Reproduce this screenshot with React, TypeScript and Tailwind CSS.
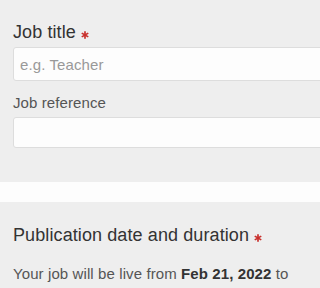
import React from "react";

function Required() {
  return (
    <svg
      viewBox="0 0 16 16"
      className="ml-[5px] inline-block h-[8px] w-[8px] align-[-1px]"
      aria-hidden="true"
    >
      <g stroke="#c9302c" strokeWidth="3.4" strokeLinecap="butt">
        <line x1="8" y1="0.5" x2="8" y2="15.5" />
        <line x1="1.5" y1="4.25" x2="14.5" y2="11.75" />
        <line x1="1.5" y1="11.75" x2="14.5" y2="4.25" />
      </g>
    </svg>
  );
}

export default function App() {
  return (
    <div className="h-[288px] w-full overflow-hidden bg-[#fdfdfd] font-['Liberation_Sans',Arial,sans-serif] tracking-[0.1px]">
      {/* Job details */}
      <section className="overflow-hidden bg-[#eeeeee] pb-[34px] pl-[13px] pt-[22px]">
        <label className="block text-[18px] leading-[20px] text-[#333333]">
          Job title
          <Required />
        </label>
        <input
          placeholder="e.g. Teacher"
          className="mt-[5px] block h-[34px] w-[calc(100%+8px)] rounded-[3px] border border-[#dddddd] bg-[#fdfdfd] px-[6px] text-[15px] text-[#333] placeholder:text-[#999999] outline-none"
        />

        <label className="mt-[12px] block text-[15px] leading-[20px] text-[#555555]">
          Job reference
        </label>
        <input className="mt-[4px] block h-[31px] w-[calc(100%+8px)] rounded-[3px] border border-[#dddddd] bg-[#fdfdfd] px-[6px] text-[15px] outline-none" />
      </section>

      <div className="h-[20px]" />

      {/* Publication */}
      <section className="bg-[#eeeeee] pb-[4px] pl-[13px] pt-[23px]">
        <h2 className="whitespace-nowrap text-[18px] leading-[20px] text-[#333333]">
          Publication date and duration
          <Required />
        </h2>
        <p className="mt-[19px] whitespace-nowrap text-[15px] leading-[20px] text-[#555555]">
          Your job will be live from <b className="text-[#333333]">Feb 21, 2022</b> to
        </p>
      </section>
    </div>
  );
}
